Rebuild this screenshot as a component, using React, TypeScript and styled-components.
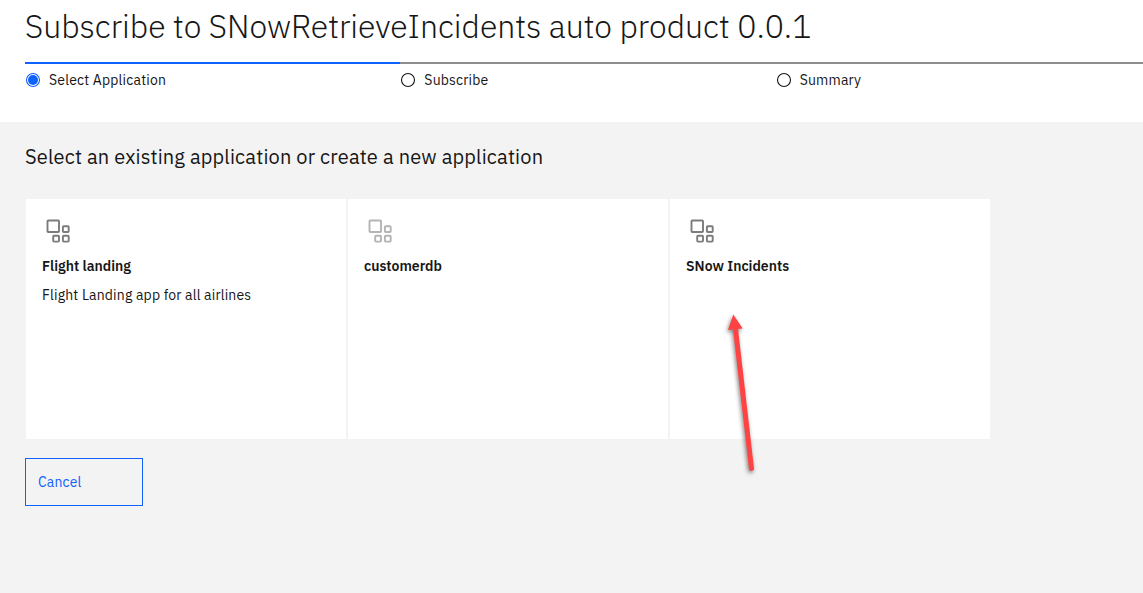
import React from 'react';
import styled, { createGlobalStyle } from 'styled-components';

const GlobalStyle = createGlobalStyle`
  *, *::before, *::after { box-sizing: border-box; }
  body {
    margin: 0;
    background: #f3f3f3;
    color: #161616;
    font-family: 'IBM Plex Sans', Roboto, 'Liberation Sans', sans-serif;
    overflow: hidden;
  }
`;

const Page = styled.div`
  position: relative;
  height: 593px;
  overflow: hidden;
`;

const Header = styled.header`
  height: 122px;
  padding: 6px 0 0 25px;
  background: #fff;
`;

const Title = styled.h1`
  margin: 0 0 16px;
  font-size: 32px;
  font-weight: 300;
  line-height: 40px;
  letter-spacing: -0.015px;
  white-space: nowrap;
`;

const Steps = styled.ol`
  display: flex;
  width: 1127px;
  margin: 0;
  padding: 0;
  list-style: none;
`;

const Step = styled.li<{ $current?: boolean }>`
  display: flex;
  flex: 0 0 375.33px;
  align-items: center;
  gap: 8px;
  height: 28px;
  padding-top: 6px;
  border-top: 2px solid ${(p) => (p.$current ? '#0f62fe' : '#8d8d8d')};
`;

const StepLabel = styled.span`
  font-size: 14px;
  line-height: 18px;
  letter-spacing: 0.18px;
`;

const StepMark = styled.svg`
  width: 16px;
  height: 16px;
`;

const Content = styled.main`
  padding: 21px 25px 0;
`;

const Heading = styled.h2`
  margin: 0 0 28px;
  font-size: 20px;
  font-weight: 400;
  line-height: 28px;
  letter-spacing: 0.17px;
  white-space: nowrap;
`;

const Cards = styled.div`
  display: grid;
  grid-template-columns: repeat(3, 320px);
  gap: 2px;
  margin: 0 0 19px 1px;
`;

const Card = styled.article`
  height: 240px;
  padding: 16px;
  background: #fff;
`;

const CardIcon = styled.svg<{ $muted?: boolean }>`
  display: block;
  width: 32px;
  height: 32px;
  fill: none;
  stroke: ${(p) => (p.$muted ? '#b4b4b4' : '#7c7c7c')};
  stroke-width: 1.9;
`;

const CardTitle = styled.h3`
  margin: 10px 0 11px;
  font-size: 14px;
  font-weight: 600;
  line-height: 18px;
  letter-spacing: 0.01px;
`;

const CardText = styled.p`
  margin: 0;
  font-size: 14px;
  line-height: 18px;
  letter-spacing: 0.17px;
`;

const CancelButton = styled.button`
  display: flex;
  align-items: center;
  width: 118px;
  height: 48px;
  padding: 0 12px;
  border: 1px solid #0f62fe;
  background: transparent;
  color: #0f62fe;
  font: inherit;
  font-size: 14px;
  letter-spacing: 0.16px;
`;

const Pointer = styled.svg`
  position: absolute;
  left: 715px;
  top: 305px;
  width: 55px;
  height: 180px;
  overflow: visible;
  filter: drop-shadow(-1px 2px 2px rgba(0, 0, 0, 0.5));
`;

const steps = [
  { label: 'Select Application', current: true },
  { label: 'Subscribe', current: false },
  { label: 'Summary', current: false },
];

const apps = [
  { name: 'Flight landing', text: 'Flight Landing app for all airlines', muted: false },
  { name: 'customerdb', text: '', muted: true },
  { name: 'SNow Incidents', text: '', muted: false },
];

export default function App() {
  return (
    <Page>
      <GlobalStyle />
      <Header>
        <Title>Subscribe to SNowRetrieveIncidents auto product 0.0.1</Title>
        <Steps>
          {steps.map((s) => (
            <Step key={s.label} $current={s.current}>
              <StepMark viewBox="0 0 16 16">
                <circle cx="8" cy="8" r="6.5" fill="none" stroke={s.current ? '#0f62fe' : '#161616'} strokeWidth="1.1" />
                {s.current && <circle cx="8" cy="8" r="5" fill="#0f62fe" />}
              </StepMark>
              <StepLabel>{s.label}</StepLabel>
            </Step>
          ))}
        </Steps>
      </Header>
      <Content>
        <Heading>Select an existing application or create a new application</Heading>
        <Cards>
          {apps.map((a) => (
            <Card key={a.name}>
              <CardIcon $muted={a.muted} viewBox="0 0 32 32">
                <rect x="5.5" y="5.5" width="11.5" height="11.5" rx="0.8" />
                <rect x="20.9" y="11.2" width="5.8" height="5.8" rx="0.8" />
                <rect x="11.2" y="20.8" width="5.8" height="5.8" rx="0.8" />
                <rect x="20.9" y="20.8" width="5.8" height="5.8" rx="0.8" />
              </CardIcon>
              <CardTitle>{a.name}</CardTitle>
              {a.text && <CardText>{a.text}</CardText>}
            </Card>
          ))}
        </Cards>
        <CancelButton type="button">Cancel</CancelButton>
      </Content>
      <Pointer viewBox="0 0 55 180">
        <path d="M20.5 24 L36.5 163.5" stroke="#ff4343" strokeWidth="5" strokeLinecap="round" />
        <path d="M18.3 9.5 L13 25 L27.7 23.6 Z" fill="#ff4343" />
      </Pointer>
    </Page>
  );
}
